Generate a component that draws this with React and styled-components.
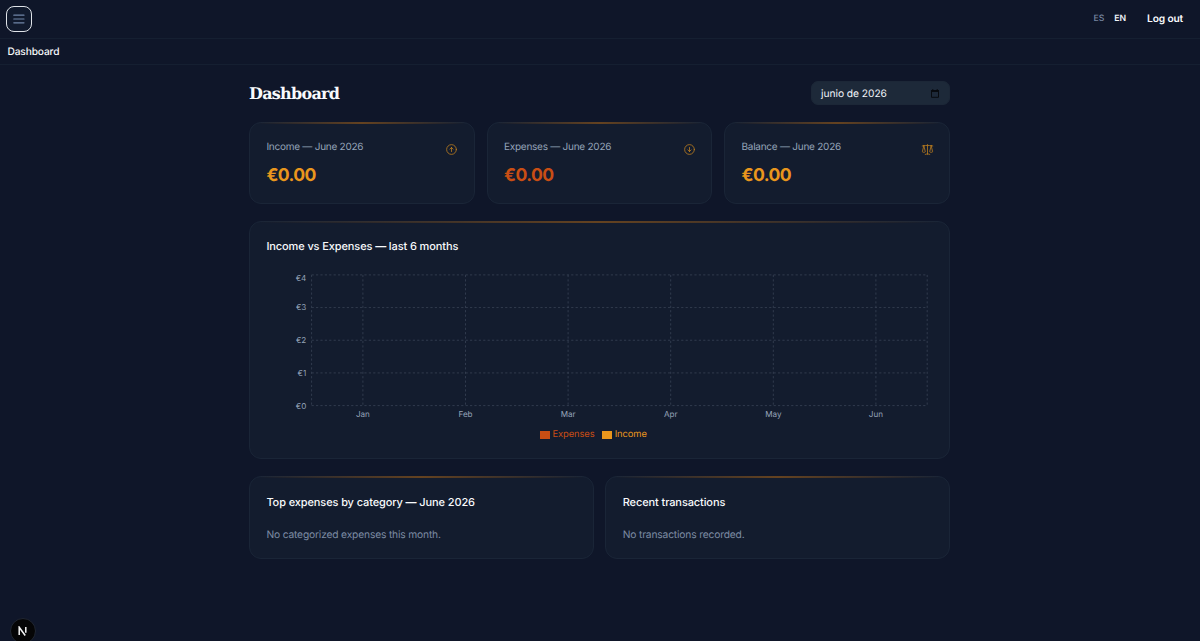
import React, { useState } from 'react';
import styled, { createGlobalStyle } from 'styled-components';
import {
    HiBars3,
    HiOutlineArrowDownCircle,
    HiOutlineArrowUpCircle,
    HiOutlineScale,
} from 'react-icons/hi2';

const GlobalStyle = createGlobalStyle`
    * {
        box-sizing: border-box;
    }

    body {
        margin: 0;
        background: #0f172a;
        color: #f8fafc;
        font-family: Inter, "Liberation Sans", sans-serif;
        text-rendering: geometricPrecision;
        overflow: hidden;
    }

    button {
        font-family: inherit;
        text-rendering: inherit;
        cursor: pointer;
    }
`;

const Page = styled.div`
    position: relative;
    height: 641px;
    background: #0f1629;
`;

const TopBar = styled.header`
    display: flex;
    align-items: center;
    justify-content: space-between;
    height: 39px;
    padding: 0 17px 1px 6px;
    border-bottom: 1px solid #151f31;
`;

const MenuButton = styled.button`
    display: flex;
    align-items: center;
    justify-content: center;
    width: 26px;
    height: 26px;
    padding: 0;
    border: 1.5px solid #dfe3e8;
    border-radius: 8px;
    background: #111a2d;
    color: #7085a8;
`;

const MenuLines = styled.svg`
    display: block;
    stroke: currentColor;
    stroke-width: 1.2;
    stroke-linecap: round;
`;

const TopActions = styled.div`
    display: flex;
    align-items: center;
    margin-top: 1px;
`;

const LangButton = styled.button`
    padding: 0;
    margin-right: ${(props) => props.$gap}px;
    border: 0;
    background: none;
    color: ${(props) => (props.$active ? '#f1f5f9' : '#7786a0')};
    font-size: 8.7px;
    font-weight: ${(props) => (props.$active ? 600 : 500)};
    line-height: 12px;
`;

const LogoutButton = styled.button`
    padding: 0;
    border: 0;
    background: none;
    color: #f8fafc;
    font-size: 10.2px;
    font-weight: 600;
    line-height: 14px;
    letter-spacing: -0.15px;
`;

const Breadcrumb = styled.nav`
    display: flex;
    align-items: center;
    height: 26px;
    padding: 1px 7.5px 0;
    border-bottom: 1px solid #151f31;
    font-size: 10.2px;
    font-weight: 500;
    letter-spacing: -0.15px;
`;

const Main = styled.main`
    width: 701px;
    margin-left: 249px;
    padding-top: 16px;
`;

const TitleRow = styled.div`
    display: flex;
    align-items: center;
    justify-content: space-between;
    height: 24px;
    margin-bottom: 17px;
`;

const Title = styled.h1`
    margin: 2px 0 0;
    font-family: "DejaVu Serif", "Liberation Serif", serif;
    font-size: 16px;
    font-weight: 700;
    line-height: 24px;
    letter-spacing: -0.72px;
`;

const MonthField = styled.button`
    display: flex;
    align-items: center;
    justify-content: space-between;
    width: 139px;
    height: 24px;
    padding: 1px 10px 0 9px;
    border: 1px solid #1c2737;
    border-radius: 7px;
    background: #1d2939;
    color: #f1f5f9;
    font-size: 10.25px;
    letter-spacing: -0.05px;
`;

const Card = styled.section`
    position: relative;
    height: ${(props) => props.$height}px;
    padding: 0 16.4px;
    border: 1px solid #1a2537;
    border-radius: 12px;
    background: #131c2e;

    &::before {
        content: '';
        position: absolute;
        top: -1px;
        left: 8px;
        right: 8px;
        height: 2px;
        background: linear-gradient(90deg, transparent, #644220, transparent);
    }
`;

const StatGrid = styled.div`
    display: grid;
    grid-template-columns: repeat(3, 1fr);
    gap: 11.7px;
    margin-bottom: 17px;
`;

const StatHead = styled.div`
    display: flex;
    align-items: flex-start;
    justify-content: space-between;
    padding-top: 16.6px;
    color: #94a3b8;
    font-size: 10px;
    line-height: 15px;
    letter-spacing: -0.25px;
`;

const StatIcon = styled.span`
    display: flex;
    margin: 3px -1px 0 0;
    color: #b97b1f;
    font-size: 13px;
`;

const StatValue = styled.div`
    margin-top: 7.2px;
    color: ${(props) => props.$color};
    font-size: 17.6px;
    font-weight: 700;
    line-height: 26px;
    letter-spacing: -0.6px;
`;

const CardTitle = styled.h2`
    margin: 0;
    padding-top: ${(props) => props.$top || 16.5}px;
    font-size: 11px;
    font-weight: 500;
    line-height: 16px;
    letter-spacing: -0.11px;
`;

const ChartSvg = styled.svg`
    display: block;
    width: 668px;
    height: 154px;
    margin-top: 11.5px;
    font-size: 8.1px;
    fill: #94a3b8;
`;

const GridLine = styled.line`
    stroke: #384355;
    stroke-width: 0.8;
    stroke-dasharray: 2.2 2.2;
`;

const Legend = styled.div`
    display: flex;
    justify-content: center;
    gap: 7.5px;
    margin-top: 9px;
    padding-right: 12.4px;
`;

const LegendItem = styled.div`
    display: flex;
    align-items: center;
    gap: 2.5px;
    color: ${(props) => props.$color};
    font-size: 9.4px;
    line-height: 12px;
    letter-spacing: -0.1px;
`;

const Swatch = styled.span`
    width: 10.2px;
    height: 7.5px;
    margin-top: 1px;
    background: ${(props) => props.$color};
`;

const PanelGrid = styled.div`
    display: grid;
    grid-template-columns: repeat(2, 1fr);
    gap: 11.7px;
    margin-top: 17px;
`;

const EmptyText = styled.p`
    margin: 17px 0 0;
    color: #7c8ba3;
    font-size: 10.25px;
    line-height: 16px;
    letter-spacing: -0.17px;
`;

const DevBadge = styled.div`
    position: absolute;
    left: 9.5px;
    top: 618px;
    display: flex;
    align-items: center;
    justify-content: center;
    width: 26px;
    height: 26px;
    border: 1px solid #202632;
    border-radius: 50%;
    background: #050506;
`;

const ORANGE = '#e9961d';
const RUST = '#c94e14';

const stats = [
    { label: 'Income', color: ORANGE, Icon: HiOutlineArrowUpCircle },
    { label: 'Expenses', color: RUST, Icon: HiOutlineArrowDownCircle },
    { label: 'Balance', color: ORANGE, Icon: HiOutlineScale },
];

const months = ['Jan', 'Feb', 'Mar', 'Apr', 'May', 'Jun'];

// plot area inside the chart
const LEFT = 45.6;
const TOP = 8.9;
const WIDTH = 615.6;
const HEIGHT = 130.7;

const Chart = () => {
    const step = WIDTH / months.length;
    const columns = months.map((month, i) => LEFT + step * (i + 0.5));

    return (
        <ChartSvg viewBox="0 0 668 154">
            {[0, 1, 2, 3, 4].map((value) => {
                const y = TOP + HEIGHT - (HEIGHT / 4) * value;
                return (
                    <g key={value}>
                        <GridLine x1={LEFT} x2={LEFT + WIDTH} y1={y} y2={y} />
                        <text x={LEFT - 5.3} y={(value === 4 ? y + 3.2 : y) + 2.9} textAnchor="end">{'€' + value}</text>
                    </g>
                );
            })}
            {[LEFT, ...columns, LEFT + WIDTH].map((x) => (
                <GridLine key={x} x1={x} x2={x} y1={TOP} y2={TOP + HEIGHT} />
            ))}
            {months.map((month, i) => (
                <text key={month} x={columns[i]} y="151.2" textAnchor="middle">{month}</text>
            ))}
        </ChartSvg>
    );
};

const CalendarIcon = () => (
    <svg width="8" height="9" viewBox="0 0 8 9" fill="none" stroke="#080b10">
        <path d="M.5 1.5h7v6.8h-7z" />
        <path d="M0 2.1h8" strokeWidth="1.8" />
        <path d="M1.8 0v1.5M6.2 0v1.5" />
    </svg>
);

const App = () => {
    const [lang, setLang] = useState('EN');

    return (
        <Page>
            <GlobalStyle />
            <TopBar>
                <MenuButton aria-label="Menu">
                    <MenuLines width="12" height="12" viewBox="0 0 12 12">
                        <path d="M.8 2.2h10.2M.8 6h10.2M.8 9.8h10.2" />
                    </MenuLines>
                </MenuButton>
                <TopActions>
                    <LangButton $gap={10} $active={lang === 'ES'} onClick={() => setLang('ES')}>ES</LangButton>
                    <LangButton $gap={21} $active={lang === 'EN'} onClick={() => setLang('EN')}>EN</LangButton>
                    <LogoutButton>Log out</LogoutButton>
                </TopActions>
            </TopBar>
            <Breadcrumb>Dashboard</Breadcrumb>

            <Main>
                <TitleRow>
                    <Title>Dashboard</Title>
                    <MonthField>
                        junio de 2026
                        <CalendarIcon />
                    </MonthField>
                </TitleRow>

                <StatGrid>
                    {stats.map(({ label, color, Icon }) => (
                        <Card key={label} $height={81.5}>
                            <StatHead>
                                <span>{label} — June 2026</span>
                                <StatIcon><Icon /></StatIcon>
                            </StatHead>
                            <StatValue $color={color}>€0.00</StatValue>
                        </Card>
                    ))}
                </StatGrid>

                <Card $height={238}>
                    <CardTitle>Income vs Expenses — last 6 months</CardTitle>
                    <Chart />
                    <Legend>
                        <LegendItem $color={RUST}><Swatch $color={RUST} />Expenses</LegendItem>
                        <LegendItem $color={ORANGE}><Swatch $color={ORANGE} />Income</LegendItem>
                    </Legend>
                </Card>

                <PanelGrid>
                    <Card $height={83}>
                        <CardTitle $top={17.2}>Top expenses by category — June 2026</CardTitle>
                        <EmptyText>No categorized expenses this month.</EmptyText>
                    </Card>
                    <Card $height={83}>
                        <CardTitle $top={17.2}>Recent transactions</CardTitle>
                        <EmptyText>No transactions recorded.</EmptyText>
                    </Card>
                </PanelGrid>
            </Main>

            <DevBadge>
                <svg width="10" height="10" viewBox="0 0 10 10" fill="none" stroke="#f5f5f5" strokeWidth="1.5">
                    <path d="M1.2 9V1.2l6 8.3" />
                    <path d="M7.8 1v5.8" />
                </svg>
            </DevBadge>
        </Page>
    );
};

export default App;
